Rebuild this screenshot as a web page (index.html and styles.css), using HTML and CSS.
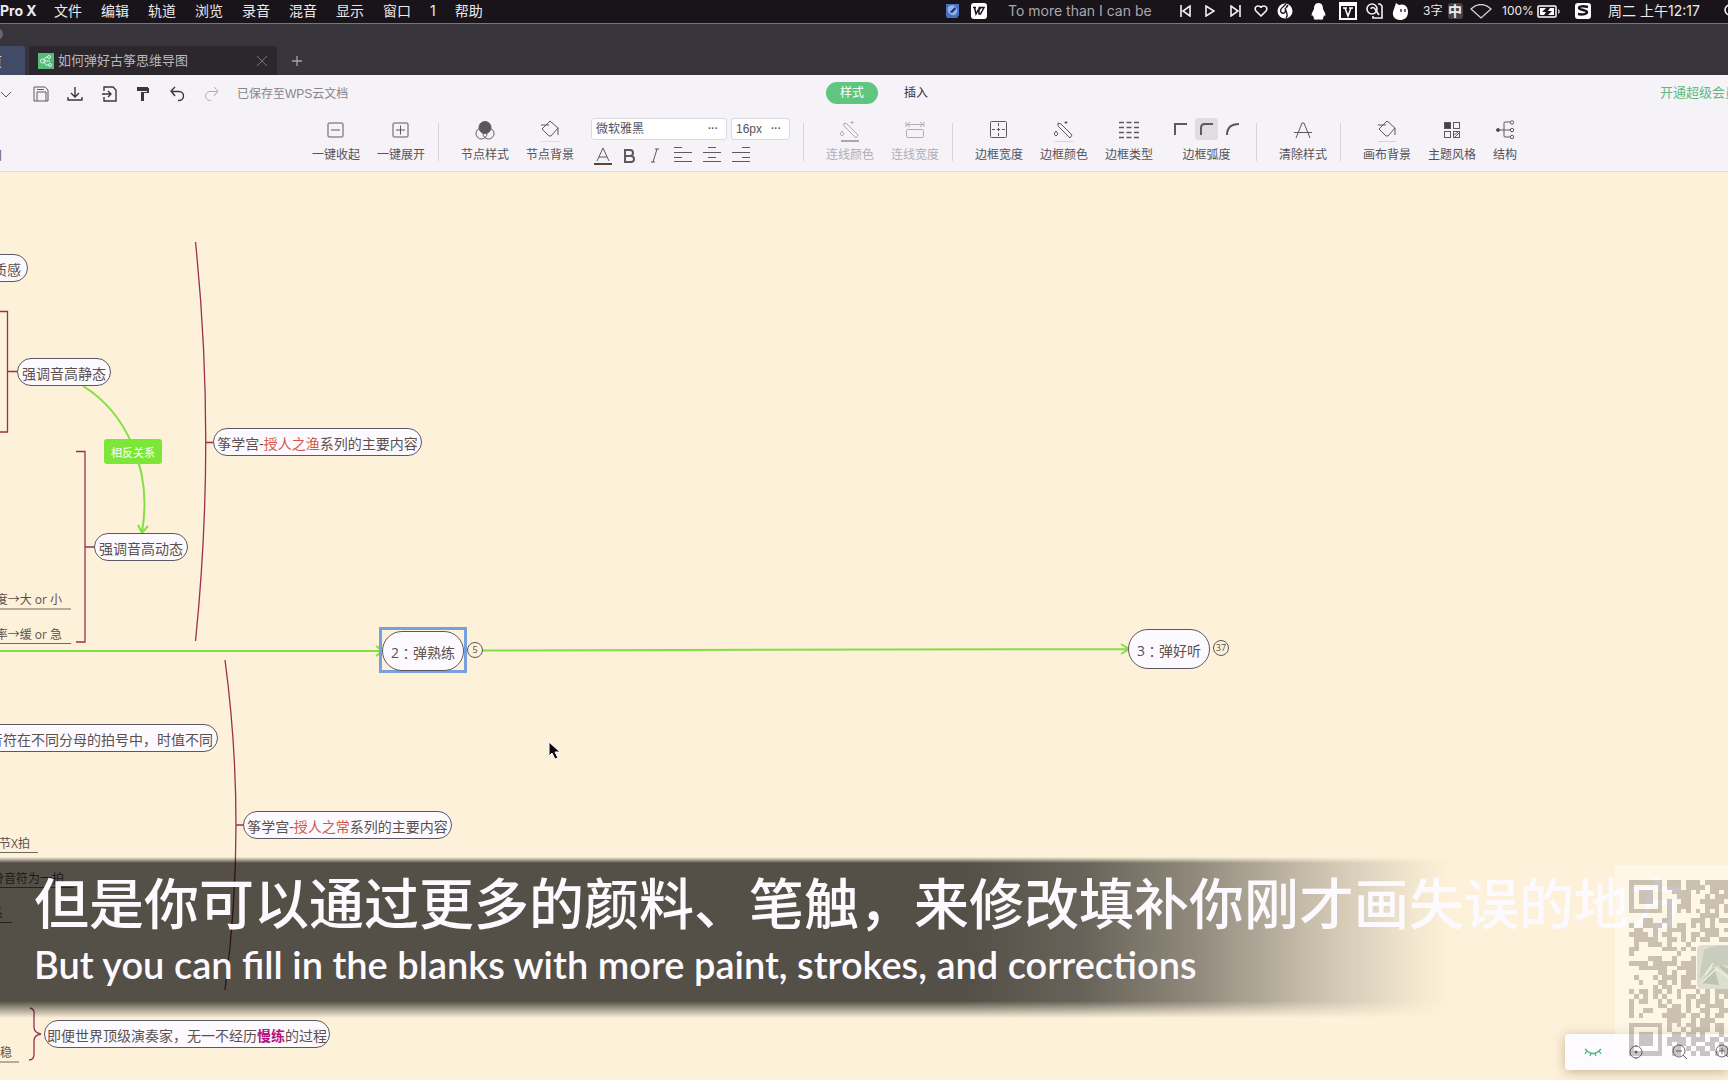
FILE: index.html
```html
<!DOCTYPE html>
<html lang="zh-CN">
<head>
<meta charset="utf-8">
<title>如何弹好古筝思维导图</title>
<link rel="stylesheet" href="styles.css">
</head>
<body>
<div class="screen">
  <nav class="menubar">
    <ul class="menus">
      <li class="app-name">Pro X</li><li>文件</li><li>编辑</li><li>轨道</li><li>浏览</li><li>录音</li><li>混音</li><li>显示</li><li>窗口</li><li>1</li><li>帮助</li>
    </ul>
    <div class="status">
      <svg width="15" height="16" viewBox="0 0 15 16"><path d="M1 1h13v11l-2 3H2l-1-2z" fill="#4a6fc4"/><path d="M3 4c3-3 8-2 9 2s-2 7-5 6-5-4-4-8z" fill="#8fb2ea"/><path d="M5 9l5-5 1 2-4 4z" fill="#1d2c58"/></svg>
      <svg width="16" height="16" viewBox="0 0 16 16"><rect width="16" height="16" rx="3" fill="#fff"/><path d="M2 4.500h3M3.500 4.500l1.500 6.500 3-5.500h2L7.500 4.500M8 5.500v5.500h1.500L13 4.500H8" fill="none" stroke="#19141a" stroke-width="1.500"/></svg>
      <span class="lyric">To more than I can be</span>
      <svg width="11" height="12" viewBox="0 0 11 12" class="w"><path d="M1 0v12M10 1v10L3 6z"/></svg>
      <svg width="10" height="12" viewBox="0 0 10 12" class="w"><path d="M1 1v10l8-5z"/></svg>
      <svg width="11" height="12" viewBox="0 0 11 12" class="w"><path d="M10 0v12M1 1v10l7-5z"/></svg>
      <svg width="14" height="12" viewBox="0 0 14 12" class="w"><path d="M7 11L2 6C0 3 2 1 4 1c2 0 3 1 3 2 0-1 1-2 3-2s4 2 2 5z"/></svg>
      <svg width="16" height="16" viewBox="0 0 16 16"><circle cx="8" cy="8" r="7.500" fill="#fff"/><path d="M9 1L6 4c-3 2-3 5-1 6s4-1 3-3M8 5l2 6c1 2 0 3-1 4M11 2L9 5" fill="none" stroke="#19141a" stroke-width="1.400"/></svg>
      <svg width="15" height="17" viewBox="0 0 15 17"><path d="M7.500 0C11 0 12 3 12 6l2 4c1 3 0 4-1 2 0 2-1 2-1 3 1 1 0 2-4.500 1.500C3 17 2 16 3 15c0-1-1-1-1-3-1 2-2 1-1-2l2-4c0-3 1-6 4.500-6z" fill="#fff"/></svg>
      <svg width="18" height="18" viewBox="0 0 18 18"><path d="M1 3h16v14H1z" fill="none" stroke="#fff" stroke-width="2"/><path d="M0 0h18v3H0z" fill="#fff"/><path d="M4 6h4M10 6h4M6 6l3 8 3-8" fill="none" stroke="#fff" stroke-width="1.500"/></svg>
      <svg width="17" height="17" viewBox="0 0 17 17" class="w"><circle cx="6" cy="6" r="5"/><path d="M5 6c0-2 3-2 4 0l4 6M12 1h2l2 2v12H7v-2"/></svg>
      <svg width="17" height="17" viewBox="0 0 17 17"><path d="M3 3l1-3 3 2c5-2 9 1 9 7s-4 8-8 8-8-3-7-8z" fill="#fff"/><path d="M9 6v3M13 6v3" stroke="#19141a" stroke-width="1.300"/></svg>
      <span class="small">3字</span>
      <span class="ime">中</span>
      <svg width="22" height="15" viewBox="0 0 22 15"><path d="M1 5C7-1 15-1 21 5L11 14z" fill="none" stroke="#d6d4d8" stroke-width="1.300"/></svg>
      <span class="small">100%</span>
      <svg width="23" height="13" viewBox="0 0 23 13"><rect x="1" y="1" width="18" height="11" rx="1" fill="none" stroke="#fff" stroke-width="1.500"/><path d="M21 5h1v3h-1" stroke="#fff" fill="none"/><path d="M3 3h6l-4 4h4l-2 3H3zM17 10h-6l4-4h-4l2-3h4z" fill="#fff"/></svg>
      <svg width="16" height="16" viewBox="0 0 16 16"><rect width="16" height="16" rx="3" fill="#fff"/><path d="M13 4c-4-1-9-1-9 1s8 2 8 4-4 3-9 2" fill="none" stroke="#19141a" stroke-width="2.500"/></svg>
      <span>周二 上午12:17</span>
      <svg width="12" height="14" viewBox="0 0 12 14" class="w"><circle cx="6" cy="6" r="5"/></svg>
    </div>
  </nav>

  <header class="titlebar">
    <i class="traffic"></i>
    <div class="tabs">
      <button class="tab-home"><span>首页</span></button>
      <div class="tab-doc">
        <svg width="16" height="16" viewBox="0 0 16 16"><rect width="16" height="16" fill="#55bb78"/><g fill="none" stroke="#e4f6ea"><circle cx="4.500" cy="8" r="2"/><circle cx="11" cy="4" r="1.500"/><circle cx="12" cy="12" r="1.500"/><path d="M6 7l2-3h1.500M6.500 8H12M6 9l2 3h2.500"/></g></svg>
        <span>如何弹好古筝思维导图</span>
        <button class="tab-close" aria-label="关闭"><svg width="10" height="10" viewBox="0 0 10 10"><path d="M0 0l10 10M10 0L0 10" stroke="#777379" fill="none"/></svg></button>
      </div>
      <button class="tab-add" aria-label="新建"><svg width="10" height="10" viewBox="0 0 10 10"><path d="M0 5h10M5 0v10" stroke="#a5a2a8" stroke-width="1.300"/></svg></button>
    </div>
  </header>

  <section class="toolbar">
    <div class="row-file">
      <div class="quick">
        <svg width="12" height="16" viewBox="0 0 12 16" class="k"><path d="M1 6l5 5 5-5"/></svg>
        <button aria-label="保存"><svg width="16" height="16" viewBox="0 0 16 16" class="k"><path d="M1 1h11l3 3v11H1zM4 15V6h9v9M4 3.500h7"/></svg></button>
        <button aria-label="下载"><svg width="16" height="16" viewBox="0 0 16 16" class="k d"><path d="M8 1v10M4 7l4 4 4-4M1 11v3h14v-3"/></svg></button>
        <button aria-label="导入"><svg width="16" height="16" viewBox="0 0 16 16" class="k d"><path d="M3 5V1h9l3 3v11H3v-4M1 8h9M7 5l3 3-3 3"/></svg></button>
        <button aria-label="格式刷"><svg width="16" height="16" viewBox="0 0 16 16"><path d="M2 1h11v1h1v5H9v8H6V6h6V5H2z" fill="#3a373c"/></svg></button>
        <button aria-label="撤销"><svg width="16" height="16" viewBox="0 0 16 16" class="k d"><path d="M6 1L2 5l4 5M2 5.500h8c6 0 6 9 0 9H9"/></svg></button>
        <button aria-label="重做"><svg width="16" height="16" viewBox="0 0 16 16" class="k l"><path d="M11 1l4 4-4 5M15 5.500H7c-6 0-6 9 0 9h1"/></svg></button>
        <span class="saved">已保存至WPS云文档</span>
      </div>
      <div class="modes"><button class="mode on">样式</button><button class="mode">插入</button></div>
      <a class="vip" href="#">开通超级会员</a>
    </div>
    <div class="row-tools">
      <span class="cut">阅</span>
      <button class="tool"><svg width="18" height="24" viewBox="0 0 18 24" class="k"><rect x="1" y="5" width="15" height="14" rx="1"/><path d="M4 12h9"/></svg>一键收起</button>
      <button class="tool"><svg width="18" height="24" viewBox="0 0 18 24" class="k"><rect x="1" y="5" width="15" height="14" rx="1"/><path d="M4 12h9M8.500 7.500v9"/></svg>一键展开</button>
      <i class="sep"></i>
      <button class="tool"><svg width="20" height="24" viewBox="0 0 20 24" class="k"><circle cx="6.500" cy="15.500" r="5.500"/><circle cx="13.500" cy="15.500" r="5.500"/><circle cx="10" cy="9.500" r="6" fill="#5a565c"/></svg>节点样式</button>
      <button class="tool"><svg width="20" height="24" viewBox="0 0 20 24" class="k"><path d="M10 3l8 7-7 8H9l-7-7zM1 7h8M18 10v7"/><path d="M1 23.500h18" stroke="#dedae0"/></svg>节点背景</button>
      <div class="font-box">
        <div class="selects">
          <label class="pick family"><select aria-label="字体"><option>微软雅黑</option></select><b>···</b></label>
          <label class="pick size"><select aria-label="字号"><option>16px</option></select><b>···</b></label>
        </div>
        <div class="marks">
          <button class="color" aria-label="文字颜色"><svg width="18" height="20" viewBox="0 0 18 20" class="k"><path d="M3 15L9 2l6 13M5 11h8"/><path d="M0 18h18" stroke="#5b4636" stroke-width="2"/></svg></button>
          <button class="bold" aria-label="粗体"><svg width="18" height="20" viewBox="0 0 18 20" class="k"><path d="M5 4h5c4 0 4 6 0 6H5zM5 10h6c4 0 4 6 0 6H5z" stroke-width="2"/></svg></button>
          <button class="italic" aria-label="斜体"><svg width="18" height="20" viewBox="0 0 18 20" class="k"><path d="M9 3h4M5 16h4M11 3L7 16"/></svg></button>
          <button aria-label="左对齐"><svg width="18" height="20" viewBox="0 0 18 20" class="k"><path d="M0 1.500h8M0 6.500h18M0 11.500h8M0 15.500h18"/></svg></button>
          <button aria-label="居中"><svg width="18" height="20" viewBox="0 0 18 20" class="k"><path d="M5 1.500h8M0 6.500h18M5 11.500h8M0 15.500h18"/></svg></button>
          <button aria-label="右对齐"><svg width="18" height="20" viewBox="0 0 18 20" class="k"><path d="M10 1.500h8M0 6.500h18M10 11.500h8M0 15.500h18"/></svg></button>
        </div>
      </div>
      <i class="sep"></i>
      <button class="tool" disabled><svg width="20" height="24" viewBox="0 0 20 24" class="k l"><path d="M4 5l3 1 11 11-2 3L4 8zM12 3v3M10.500 4.500h3M2 13l2 3-2 2-2-2z"/><path d="M1 23h18" stroke="#aaa7ad" stroke-width="2"/></svg>连线颜色</button>
      <button class="tool" disabled><svg width="20" height="24" viewBox="0 0 20 24" class="k l"><path d="M1 4v5M19 4v5M2 6.500h16M5 4L2 6.500 5 9M15 4l3 2.500L15 9"/><rect x="1.500" y="11.500" width="17" height="8" rx="1"/></svg>连线宽度</button>
      <i class="sep"></i>
      <button class="tool"><svg width="20" height="24" viewBox="0 0 20 24" class="k"><rect x="1.500" y="3.500" width="16" height="16" rx="1"/><path d="M3 11.500h13M9.500 5v13" stroke-dasharray="3 2"/></svg>边框宽度</button>
      <button class="tool"><svg width="20" height="24" viewBox="0 0 20 24" class="k"><path d="M4 5l3 1 11 11-2 3L4 8zM12 3v3M10.500 4.500h3M2 13l2 3-2 2-2-2z"/><path d="M1 23.500h18" stroke="#d4d1d8"/></svg>边框颜色</button>
      <button class="tool"><svg width="20" height="24" viewBox="0 0 20 24" class="k"><path d="M0 4.500h20M0 9.500h20M0 14.500h20M0 19.500h20" stroke-dasharray="5 2.500" stroke-width="1.500"/></svg>边框类型</button>
      <div class="tool corners">
        <div class="corner-set">
          <button aria-label="直角"><svg width="14" height="14" viewBox="0 0 14 14" class="k"><path d="M1 13V2h12" stroke-width="2"/></svg></button>
          <button class="on" aria-label="小圆角"><svg width="14" height="14" viewBox="0 0 14 14" class="k"><path d="M1 13V6q0-4 4-4h8" stroke-width="2"/></svg></button>
          <button aria-label="大圆角"><svg width="14" height="14" viewBox="0 0 14 14" class="k"><path d="M1 13Q1 2 13 2" stroke-width="2"/></svg></button>
        </div>
        <span>边框弧度</span>
      </div>
      <i class="sep"></i>
      <button class="tool"><svg width="20" height="24" viewBox="0 0 20 24" class="k"><path d="M3 20L9 5h2l6 15M1 14.500h18"/></svg>清除样式</button>
      <i class="sep"></i>
      <button class="tool"><svg width="20" height="24" viewBox="0 0 20 24" class="k"><path d="M10 3l8 7-7 8H9l-7-7zM1 7h8M18 10v7"/><path d="M1 23.500h18" stroke="#dcd2bd"/></svg>画布背景</button>
      <button class="tool"><svg width="20" height="24" viewBox="0 0 20 24" class="k"><rect x="2.500" y="4.500" width="6" height="6" fill="#454147"/><rect x="11.500" y="4.500" width="6" height="6"/><rect x="2.500" y="13.500" width="6" height="6"/><rect x="11.500" y="13.500" width="6" height="6"/><path d="M12 17l4-3M13 19l4-4"/></svg>主题风格</button>
      <button class="tool narrow"><svg width="20" height="24" viewBox="0 0 20 24" class="k"><circle cx="3" cy="12" r="1.500" fill="#454147"/><path d="M4 12h11M9 12V5q0-1 1-1h5M9 12v6q0 1 1 1h5"/><circle cx="17" cy="4.500" r="1.700"/><circle cx="17" cy="12" r="1.700"/><circle cx="17" cy="19" r="1.700"/></svg>结构</button>
    </div>
  </section>

  <main class="canvas">
    <svg class="links" width="100%" height="100%">
      <g transform="translate(0 -172)" fill="none">
        <g stroke="#9c2f4c" stroke-width="1.300">
          <path d="M0 311.500h7.500V432H0M7.500 371.500H17"/>
          <path d="M76 451.500h9V642h-9M85 547h10"/>
          <path d="M195.500 242Q216 441 195.500 641M206 442.500h8"/>
          <path d="M225 660Q247 825 225 990M236 825h8"/>
          <path d="M30 1008q5 1 4 7v12q0 6 7 7-7 1-7 7v13q0 6-5 6"/>
        </g>
        <g stroke="#82e045" stroke-width="2">
          <path d="M0 651h384M376 646l7 5-7 5M482 650.500L1129 649M1121 644l8 5-8 5"/>
          <path d="M83 386C125 412 153 468 142 532M138 525l4 8 6-7"/>
        </g>
        <g stroke="#6d6a63">
          <path d="M0 609H71M0 643.500H71M0 852.500H38M0 887.500H74M0 922.500H12M0 1062H19"/>
        </g>
      </g>
    </svg>
    <div class="node n-texture">质感</div>
    <div class="node n-static">强调音高静态</div>
    <div class="node n-dynamic">强调音高动态</div>
    <div class="relation">相反关系</div>
    <div class="node n-fish">筝学宫-<em>授人之渔</em>系列的主要内容</div>
    <div class="node n-notes">音符在不同分母的拍号中，时值不同</div>
    <div class="node n-common">筝学宫-<em>授人之常</em>系列的主要内容</div>
    <div class="node n-slow">即便世界顶级演奏家，无一不经历<strong>慢练</strong>的过程</div>
    <div class="leaf f-depth">度→大 or 小</div>
    <div class="leaf f-rate">率→缓 or 急</div>
    <div class="leaf f-beat">节X拍</div>
    <div class="leaf f-note">分音符为一拍</div>
    <div class="leaf f-rel">系</div>
    <div class="leaf f-steady">稳</div>
    <div class="selection"></div>
    <div class="node main n-two">2<span class="colon">：</span>弹熟练</div>
    <div class="count c-two">5</div>
    <div class="node main n-three">3<span class="colon">：</span>弹好听</div>
    <div class="count c-three">37</div>
    <svg class="cursor" width="13" height="19" viewBox="0 0 13 19"><path d="M1 1v14l3-3 3 6 3-1-3-6h5z" fill="#0c0a0c" stroke="#fff"/></svg>

    <div class="zoombar">
      <button aria-label="专注"><svg width="18" height="18" viewBox="0 0 18 18" fill="none" stroke="#4fb878" stroke-width="1.300"><path d="M1 6q8 9 16 0M3 8l-2 3M7 10l-1 3M11 10l1 3M15 8l2 3"/></svg></button>
      <button aria-label="定位"><svg width="18" height="18" viewBox="0 0 18 18" class="k"><circle cx="9" cy="9" r="6"/><circle cx="9" cy="9" r="1" fill="#222"/><path d="M9 2v2M9 14v2"/></svg></button>
      <button aria-label="缩小"><svg width="18" height="18" viewBox="0 0 18 18" class="k"><circle cx="9" cy="8" r="6"/><path d="M6 8h6M13 12l4 4"/></svg></button>
      <button aria-label="放大"><svg width="18" height="18" viewBox="0 0 18 18" class="k"><circle cx="9" cy="8" r="6"/><path d="M6 8h6M9 5v6M13 12l4 4"/></svg></button>
    </div>

    <div class="shade"></div>
    <div class="captions">
      <p class="zh">但是你可以通过更多的颜料、笔触，来修改填补你刚才画失误的地方</p>
      <p class="en" lang="en">But you can fill in the blanks with more paint, strokes, and corrections</p>
    </div>

    <div class="qr">
      <svg width="176" height="176" viewBox="0 0 37 37" shape-rendering="crispEdges"><path id="qr-cells" fill="#201000" fill-opacity=".23"/></svg>
      <svg class="avatar" width="44" height="44" viewBox="0 0 44 44"><rect width="44" height="44" rx="5" fill="#dcdfce"/><path d="M2 34L7 5Q20-3 44 3v24L28 20 14 22z" fill="#c9cdbd"/><path d="M3 38l14-16 5 18M22 22l22 19V30L24 20z" fill="#bfc4b2"/><path d="M4 38l15-14 21 14M8 30l8-12" fill="none" stroke="#eceee1" stroke-width="1.500"/></svg>
    </div>
  </main>
</div>
<script src="qr.js"></script>
</body>
</html>
```
FILE: styles.css
```css
* { box-sizing: border-box; }
body { margin: 0; font-family: "Liberation Sans", "Noto Sans CJK SC", sans-serif; }
button { border: 0; padding: 0; background: none; font: inherit; color: inherit; display: block; }
svg { display: block; flex: none; }
.screen { display: flex; flex-direction: column; height: 100vh; overflow: hidden; }

.menubar { display: flex; justify-content: space-between; height: 24px; padding-top: 1px; background: #19141a; border-bottom: 1px solid #77747a; color: #eceaee; font: 14px/20px Inter, "Noto Sans CJK SC", sans-serif; white-space: nowrap; }
.menus { display: flex; gap: 19px; margin: 0; padding: 0; list-style: none; }
.app-name { width: 35px; font-weight: 700; }
.status { display: grid; grid-template-columns: 26px 37px 172px 25px 25px 24px 23px 34px 28px 27px 26px 31px 25px 22px 32px 35px 38px 33px 116px 4px; align-items: center; height: 20px; overflow: hidden; }
.w { fill: none; stroke: #f3f1f5; stroke-width: 1.6; }
.lyric { color: #aaa7ad; }
.small { font-size: 12px; }
.ime { width: 15px; background: #454147; border-radius: 3px; line-height: 16px; font-weight: 700; }

.titlebar { height: 51px; background: #38343c; position: relative; display: flex; align-items: flex-end; }
.traffic { position: absolute; left: -9px; top: 4px; width: 12px; height: 12px; border-radius: 6px; background: #69656b; }
.tabs { display: flex; align-items: center; height: 29px; font-size: 13px; color: #bab7bb; }
.tab-home { width: 25px; height: 29px; margin-right: 4px; background: #414a66; border-radius: 0 3px 0 0; overflow: hidden; color: #dfe2ec; }
.tab-home span { display: block; width: 26px; margin-left: -24px; }
.tab-doc { display: flex; align-items: center; gap: 4px; width: 248px; height: 29px; padding: 1px 10px 0 9px; background: #2b272c; border-radius: 3px 3px 0 0; line-height: 20px; }
.tab-close { margin-left: auto; }
.tab-add { margin-left: 15px; }

.toolbar { height: 97px; background: #f5f2f8; border-bottom: 1px solid #dedbe0; color: #565258; font-size: 12px; line-height: 18px; }
.k { fill: none; stroke: #5d595f; stroke-width: 1; }
.k.d { stroke: #3a373c; stroke-width: 1.4; }
.k.l { stroke: #aeabb1; }
.row-file { display: grid; grid-template-columns: 826px 1fr 68px; align-items: center; height: 36px; white-space: nowrap; }
.quick { display: flex; align-items: center; padding-top: 1px; }
.quick button { margin-right: 18px; }
.quick > svg { margin-right: 21px; }
.saved { color: #88858a; }
.modes { display: flex; gap: 12px; }
.mode { width: 52px; height: 22px; border-radius: 11px; color: #353137; }
.mode.on { background: #5fc57f; color: #fff; }
.vip { font-size: 13px; color: #5fb97e; text-decoration: none; overflow: hidden; }
.row-tools { display: flex; gap: 17px; height: 60px; padding-top: 7px; white-space: nowrap; }
.cut { width: 12px; margin: 29px 293px 0 -10px; }
.tool { display: flex; flex-direction: column; align-items: center; width: 48px; height: 48px; gap: 4px; flex: none; }
.tool:disabled { color: #b1aeb4; }
.tool.narrow { width: 24px; }
.sep { width: 1px; height: 38px; margin: 5px 5px 0 -4px; background: #d6d3d9; flex: none; }
.font-box { width: 199px; flex: none; }
.selects { display: flex; gap: 4px; }
.pick { display: flex; align-items: center; height: 22px; background: #fff; border: 1px solid #dbd8de; border-radius: 3px; padding: 0 8px 0 4px; }
.family { width: 136px; }
.size { width: 59px; }
.pick select { appearance: none; border: 0; background: none; padding: 0; flex: 1; min-width: 0; font: inherit; color: inherit; }
.pick b { font-size: 10px; line-height: 12px; }
.marks { display: flex; gap: 11px; margin: 6px 0 0 3px; }
.marks button { width: 18px; height: 20px; }
.marks .color { margin-right: -3px; }
.marks .bold { margin-right: -3px; }
.marks .italic { margin-right: -1px; }
.tool.corners { width: 73px; }
.corner-set { display: flex; gap: 3px; height: 24px; }
.corner-set button { display: grid; place-items: center; width: 23px; height: 22px; border-radius: 3px; }
.corner-set .on { background: #dfdce2; }

.canvas { position: relative; flex: 1; min-height: 0; overflow: hidden; background: #fdf1d9; color: #5b504e; font: 14px/20px "Open Sans", "Noto Sans CJK SC", sans-serif; white-space: nowrap; }
.links { position: absolute; inset: 0; }
.node, .leaf, .relation, .count, .selection, .cursor, .zoombar, .shade, .captions, .qr { position: absolute; }
.node { display: flex; align-items: center; justify-content: center; height: 28px; padding-top: 3px; background: #fdfaff; border: 1px solid #5c5860; border-radius: 14px; }
.node em { font-style: normal; color: #d2584c; }
.node strong { color: #b3127c; }
.colon { font-family: "Noto Sans CJK TC", sans-serif; }
.n-texture { left: -60px; top: 82px; width: 88px; justify-content: flex-end; padding-right: 6px; }
.n-static { left: 17px; top: 186px; width: 94px; }
.n-dynamic { left: 94px; top: 361px; width: 94px; }
.n-fish { left: 213px; top: 256px; width: 209px; }
.n-notes { left: -60px; top: 552px; width: 278px; justify-content: flex-end; padding-right: 4px; }
.n-common { left: 243px; top: 639px; width: 209px; }
.n-slow { left: 44px; top: 848px; width: 286px; }
.relation { left: 104px; top: 267px; width: 58px; height: 25px; padding-top: 2px; border-radius: 3px; background: #7ce738; color: #fff; font-size: 11px; line-height: 23px; text-align: center; }
.node.main { height: 40px; width: 82px; border-radius: 20px; }
.n-two { left: 382px; top: 459px; }
.n-three { left: 1128px; top: 457px; }
.selection { left: 379px; top: 455px; width: 88px; height: 46px; border: 3px solid #76a1de; }
.count { width: 16px; height: 16px; border: 1px solid #5c5860; border-radius: 8px; font-size: 9px; line-height: 14px; text-align: center; background: #fcf1d9; }
.c-two { left: 467px; top: 470px; }
.c-three { left: 1213px; top: 468px; }
.leaf { left: -60px; font-size: 12px; text-align: right; }
.f-depth { top: 418px; width: 122px; }
.f-rate { top: 453px; width: 122px; }
.f-beat { top: 662px; width: 90px; }
.f-note { top: 697px; width: 124px; }
.f-rel { top: 732px; width: 63px; }
.f-steady { top: 871px; width: 72px; }
.cursor { left: 548px; top: 569px; }

.shade { left: 0; top: 685px; width: 1460px; height: 162px;
  background: linear-gradient(90deg, rgba(0,0,0,.67) 0, rgba(0,0,0,.67) 960px, rgba(0,0,0,.59) 1084px, rgba(0,0,0,.43) 1194px, rgba(0,0,0,.22) 1305px, rgba(0,0,0,.04) 1415px, transparent 1450px);
  mask-image: linear-gradient(transparent 0, #000 6px, #000 144px, transparent 161px); }
.captions { left: 34px; top: 694px; color: #fdfaff; }
.captions p { margin: 0; }
.zh { font: 500 55px/68px "Noto Sans CJK SC", sans-serif; }
.en { font: 600 38px/60px Lato, sans-serif; }

.zoombar { left: 1565px; right: 0; top: 862px; height: 36px; display: flex; align-items: center; gap: 25px; padding-left: 19px; background: #fdfbff; border-radius: 3px 0 0 3px; box-shadow: 0 2px 12px rgba(90,70,30,.35); overflow: hidden; }
.zoombar .k { stroke: #1c1a1e; }
.qr { left: 1615px; right: 0; top: 693px; height: 205px; padding: 15px 0 0 14px; background: rgba(255,255,255,.35); overflow: hidden; }
.avatar { position: absolute; left: 82px; top: 80px; }
```
FILE: qr.js
```js
// Cells of the code, one string per row.
const rows = [
  "#######.###.###.#####",
  "#.....#.###.####.####",
  "#.###.#..####.#..##.#",
  "#.###.#...###...#.###",
  "#.###.#.#..##..#####.",
  "#.....#.#.###...###.#",
  "#######.#.#.#.#.#.#.#",
  "........#......####..",
  "...##..##....###.#.##",
  "#..####.#.##.#.#.#...",
  ".##..#..####...####.#",
  "####.#.##..#.##.###..",
  ".#####..##.#.#.##..##",
  ".#..###.#...#........",
  "##.....###.#.#.......",
  "#.........#..........",
  "....###..#...#.......",
  "####.#####.###.......",
  "..######..####.......",
  "......##.#..##.......",
  ".#...#.###.###.......",
  "..#...##.#.##........",
  ".....#.##..###.......",
  "#.##.##.#.#...#.#.###",
  ".#.#.#.#..#.##.##.#.#",
  "#.##..#.#...#.###.##.",
  "#.....##.##.#.#.####.",
  "#..##...###.#..##..##",
  "#.#....#####.##.#.##.",
  "........###..#.###...",
  "#######.#.#.##.##.##.",
  "#.....#.#..#.####.##.",
  "#.###.#..##.##.#...#.",
  "#.###.#.####.###.##.#",
  "#.###.#.#.##.#..##.#.",
  "#.....#..##.#.##.#.##",
  "#######..##..#.##.#.#"
];
let d = "";
rows.forEach((row, y) => {
  for (const run of row.matchAll(/#+/g)) {
    d += `M${run.index} ${y}h${run[0].length}v1h-${run[0].length}z`;
  }
});
document.getElementById("qr-cells").setAttribute("d", d);
```
